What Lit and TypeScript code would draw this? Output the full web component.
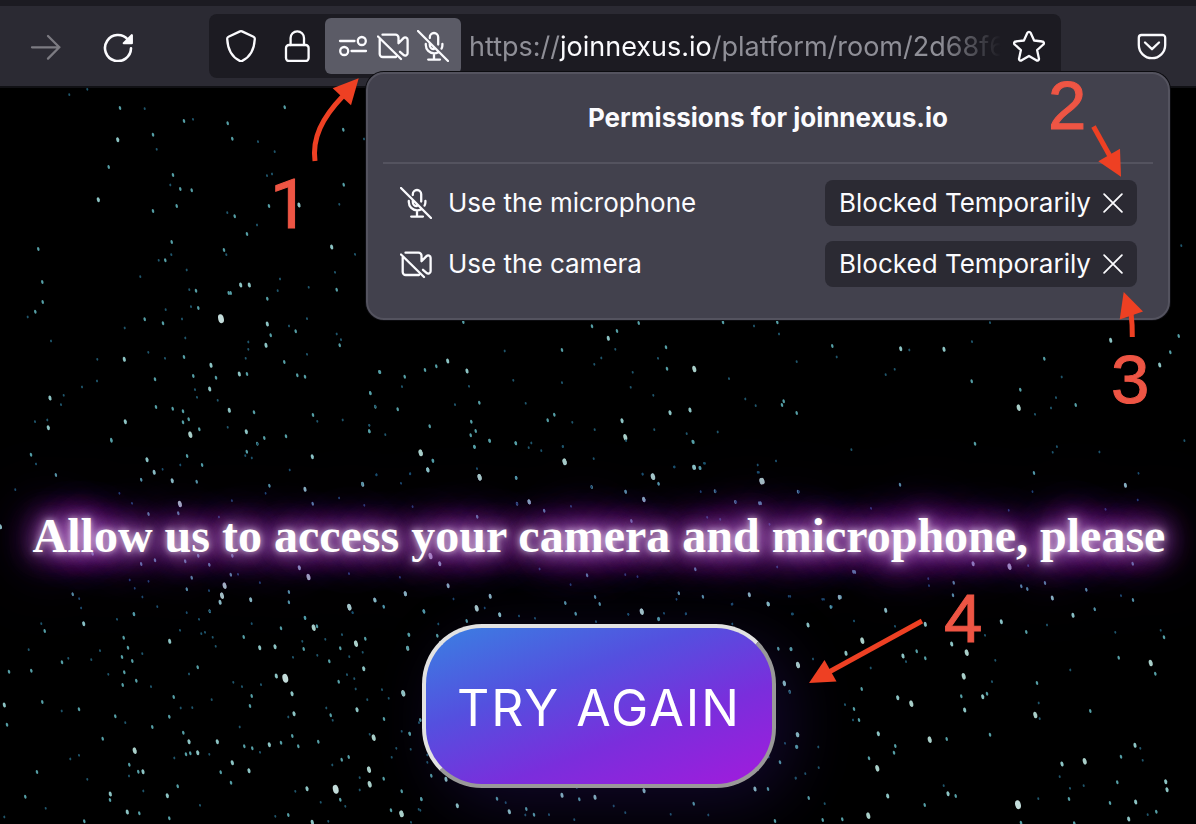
import { LitElement, html, svg, css } from "lit";
import { customElement, state } from "lit/decorators.js";

type Sector = { x: number; y: number; w: number; stars: string };

// Each sector of the sky lists "x,y,magnitude" on a grid of w × 3 units per pixel.
const SKY: Sector[] = [
  {
    x: 0, y: 88, w: 3,
    stars: `262,4,1 208,20,1 360,60,2 434,62,1 552,99,2 579,94,1 683,106,2 854,58,2 353,155,3 459,140,2 470,184,1 697,152,2
    774,161,1 824,191,1 1030,125,2 1092,153,1 326,237,2 519,261,2 511,291,1 541,303,2 575,307,2 530,354,2 295,335,3 459,369,2
    682,374,1 704,385,2 807,354,2 897,351,3 801,263,1 816,258,1 1031,290,2 1018,349,1 741,438,2 771,411,1 115,483,2 515,462,2
    514,500,1 496,517,2 476,517,1 672,486,2 679,500,1 995,477,3 1065,499,1 127,582,2 128,642,2 106,671,2 83,687,1 153,759,1
    421,566,1 560,546,1 568,605,1 588,608,2 573,656,1 595,660,2 546,693,1 497,665,1 434,694,2 489,706,2 663,692,5 686,615,2
    692,615,2 722,591,3 748,591,3 802,632,2 833,608,1 926,598,1 1005,553,1 1010,605,2 840,573,1 802,708,3 812,742,2 798,772,3
    867,714,1 887,730,2 921,692,1 1010,738,1 1019,772,2 1023,755,1 374,720,1 556,750,1 745,762,1 745,784,1 737,811,1 373,814,3
    292,814,1 445,793,1 495,811,1 552,807,2 633,832,3 648,869,2 580,864,2 718,858,3 741,858,2 853,822,2 892,862,2 915,866,2
    921,799,1 465,874,2 246,897,1 291,879,1 150,930,3 191,922,1 183,950,1 629,903,3 585,905,1 591,928,1 468,957,2 518,962,2
    549,970,2 566,994,2 549,1003,2 688,967,3 762,973,2 939,981,2 952,1000,1 1028,996,1 376,1001,3 105,1001,1 145,1019,3
    142,996,1 334,1055,2 598,1024,2 571,1040,4 683,1018,1 739,1031,3 793,1050,2 772,1067,2 858,1045,2 1108,1030,2 1108,1012,1
    1126,956,2 1111,915,2 1138,852,2 653,937,1`,
  },
  {
    x: 360, y: 315, w: 3,
    stars: `310,21,2 696,34,2 836,24,2 771,48,2 745,70,3 766,103,1 606,105,2 434,108,1 263,138,3 229,154,2 195,165,2 321,168,3
    60,171,2 134,185,2 126,215,1 31,235,2 46,274,1 327,214,1 358,263,2 285,269,1 113,283,2 209,334,2 28,349,2 28,331,1 76,359,1
    334,320,2 347,348,2 332,361,2 343,396,2 389,377,2 467,385,2 514,384,1 506,398,1 544,407,1 583,299,2 563,316,2 497,265,1
    460,196,1 606,203,1 703,148,1 724,129,1 818,172,1 812,217,1 918,97,2 894,130,1 921,161,2 1003,162,4 1089,22,2 1182,33,1
    1252,22,2 1257,57,1 1310,140,1 1107,191,1 880,241,1 930,293,3 990,285,3 1156,252,1 1271,259,2 1266,270,2 1310,294,2
    1187,272,1 786,317,3 796,367,4 883,344,1 980,356,1 998,380,2 1073,351,1 704,344,1 637,322,1 608,395,1 614,440,4 701,431,1
    182,413,4 219,437,2 203,464,3 351,461,1 359,487,4 468,489,2 49,480,1 150,477,1 8,508,3 123,505,1 942,456,1 1001,457,3
    1019,459,2 1032,445,1 878,485,4 848,478,1 895,507,1 1193,450,1 1193,472,1 1204,499,4 695,516,2 797,530,2 851,553,3
    1065,529,2 1022,530,1 1314,530,2 1248,438,1 507,560,3 1126,561,2 1198,565,2 471,566,2`,
  },
  {
    x: 800, y: 160, w: 3,
    stars: `570,488,1 516,545,1 97,558,2 110,591,1 302,566,3 432,568,3 328,570,1 284,628,1 257,644,1 515,664,2 733,596,2 932,541,3
    1136,528,2 1111,577,2 1079,615,3 785,651,1 661,689,2 656,743,4 768,713,1 753,744,1 827,735,2 705,763,1 1144,257,1`,
  },
  {
    x: 0, y: 440, w: 2.613,
    stars: `291,2,2 81,44,2 94,72,1 146,105,2 384,59,3 403,97,3 425,88,1 369,119,2 450,122,3 514,125,2 489,48,2 471,75,1 528,75,2
    645,35,2 641,47,1 658,54,1 673,12,1 816,50,3 757,90,1 704,137,2 694,160,1 797,148,3 817,191,2 606,182,1 470,192,4 466,220,2
    345,190,1 312,160,1 388,222,2 40,149,1 1,260,3 572,231,1 886,174,1 947,132,2 984,104,1 1072,101,1 952,196,1 1099,39,4
    1131,62,2 1118,90,3 1240,20,2 1279,2,2 1253,112,4 1349,113,2 1348,10,2 1475,66,4 1471,19,1 1383,186,3 1422,212,2 1351,191,1
    1545,141,1 1247,230,2 1078,200,1 1492,199,1 242,341,2 369,372,2 405,361,2 484,364,2 547,374,2 518,347,2 607,347,2 603,404,2
    622,403,1 501,413,2 587,437,4 580,467,4 575,487,3 546,452,1 488,448,2 388,424,1 352,445,1 372,471,1 339,420,1 190,463,2
    207,476,1 212,504,1 350,523,2 411,500,1 548,514,2 655,479,3 679,428,1 755,456,2 755,487,2 782,383,3 806,411,4 797,533,2
    912,401,1 913,501,4 921,518,1 981,481,2 1003,500,1 1059,461,3 1107,514,2 1125,348,4 1149,371,3 1171,437,3 1185,477,1
    1245,505,3 1281,469,3 1306,524,2 1477,490,1 1491,434,1 1534,406,2 1410,387,1 1504,522,1 1555,471,2 1045,412,1`,
  },
  {
    x: 600, y: 440, w: 2.613,
    stars: `68,2,1 244,6,2 247,82,3 262,84,2 274,70,1 195,81,1 139,110,4 111,102,1 153,131,2 67,155,2 115,179,3 302,154,1
    415,97,1 425,123,4 420,190,2 356,186,1 520,155,1 280,232,1 314,238,1 657,29,1 784,134,2 980,11,2 1194,20,1 1183,37,1
    1305,36,1 1134,99,2 1130,155,1 1068,211,1 1373,136,3 1407,100,1 1405,180,1 1321,208,1 1527,2,1 82,243,2 443,253,1 708,205,1
    249,388,2 463,381,1 666,396,2 98,410,1 66,404,1 206,460,2 200,478,1 269,470,2 390,464,3 441,492,2 110,514,3 74,523,1
    154,536,2 225,521,1 346,492,1 497,469,1 585,478,1 606,500,1 629,471,2 504,522,1 975,371,3 1070,380,4 1119,377,1 1392,371,2`,
  },
  {
    x: 0, y: 590, w: 3,
    stars: `251,101,3 402,72,2 351,88,1 124,101,1 134,123,2 86,179,1 186,217,2 205,205,1 27,245,2 94,242,2 300,182,1 274,209,1
    371,143,2 384,173,2 366,201,2 397,213,2 427,191,1 373,247,2 409,272,2 368,285,2 325,253,1 509,154,3 540,121,1 560,68,1
    597,88,1 630,64,1 604,131,1 615,127,1 638,142,1 593,232,2 567,252,1 647,169,1 755,101,1 731,141,2 779,173,3 825,170,3
    843,115,2 915,84,2 941,113,4 951,109,2 976,148,1 907,154,1 911,177,2 952,196,1 988,214,2 879,202,1 1048,52,4 1058,68,1
    1124,30,3 1151,50,2 1216,11,3 1272,65,2 1226,134,2 1223,175,3 1096,146,2 1068,161,4 1088,187,1 1026,134,1 1021,175,2
    1048,200,1 1091,236,3 1016,275,2 1041,254,1 1063,266,1 1067,297,1 829,258,3 856,265,5 876,311,3 882,371,3 700,277,1
    726,290,1 783,284,1 755,318,2 750,348,2 635,329,1 521,321,2 508,380,2 577,353,1 542,354,1 127,336,2 13,345,3 21,404,2
    185,363,1 237,358,2 346,379,2 376,398,1 308,446,2 453,290,1 457,411,2 404,482,4 550,428,2 567,455,3 652,455,3 719,411,1
    733,469,2 757,475,2 780,487,1 808,464,3 843,458,2 877,438,2 895,469,2 955,455,2 992,376,2 998,391,1 979,354,1 1071,359,3
    1102,329,1 1166,325,1 1146,299,1 1210,310,4 1152,387,2 1121,443,4 1109,433,1 1229,431,2 1205,424,1 1257,398,1 1189,475,1
    1175,502,1 1046,501,2 1025,509,2 997,525,1 1107,539,4 1109,583,4 1079,563,1 1079,600,1 1151,566,2 1007,598,5 1021,629,2
    1036,649,1 921,596,3 886,604,1 962,637,1 865,675,2 826,679,1 937,697,3 985,694,1 1173,661,2 1205,671,4 1264,628,2
    1256,658,1 697,518,3 662,547,2 693,578,2 747,542,3 558,493,2 571,490,2 593,488,3 628,493,1 523,504,1 111,546,2 211,507,1
    237,496,1 388,524,2 415,545,2 429,545,3 387,558,1 262,568,1 76,620,2 137,655,1 331,612,3 330,630,2 430,603,1 533,589,2
    502,617,3 600,646,1 382,666,3 418,670,2 508,685,2 253,694,2 13,681,1 865,381,1 1282,517,1 1233,697,1`,
  },
  {
    x: 400, y: 600, w: 3,
    stars: `72,34,2 200,63,2 115,72,1 27,104,2 23,144,2 9,280,3 112,107,2 230,25,4 254,24,1 299,44,3 357,48,1 405,55,1 496,9,2
    527,41,2 599,12,2 588,65,1 725,35,4 685,43,1 792,40,1 775,58,2 857,42,1 995,13,1 1104,12,3 1176,42,1 997,72,1 1135,146,2
    1174,147,2 1193,195,3 1153,249,3 1169,275,2 1193,404,3 1191,440,2 1187,534,1 1140,487,2 1106,471,1 1155,430,1 1065,567,3
    1104,567,2 1125,663,2 925,645,1 881,611,2 812,643,1 732,572,3 676,638,1 641,618,1 585,592,3 538,598,2 486,586,3 530,563,1
    523,659,1 447,644,1 402,644,2 379,627,2 376,645,1 328,635,3 291,596,2 317,608,1 172,617,3 138,538,3 94,527,2 5,574,2
    64,597,2 61,631,1 4,642,4 29,401,2 61,360,2 32,448,1 82,465,1`,
  },
  {
    x: 780, y: 570, w: 3,
    stars: `220,5,2 445,26,1 447,47,1 521,38,2 519,76,2 795,39,2 724,49,2 742,57,2 817,84,3 919,59,2 1023,77,1 1059,90,2
    178,82,3 127,88,1 152,111,2 26,79,1 36,132,1 84,165,3 317,121,3 222,153,1 345,169,1 436,163,3 247,212,4 198,250,3 369,258,3
    378,275,1 410,244,2 436,265,2 272,294,1 245,357,2 99,267,1 54,285,4 13,341,3 32,238,2 29,366,1 515,222,3 560,248,4
    615,196,1 664,155,3 739,186,2 879,136,3 944,118,2 801,165,1 1006,187,1 1152,202,2 1142,181,1 1016,263,2 1112,279,4
    1126,311,2 871,300,1 771,339,2 551,319,4 636,335,1 646,271,1 608,380,3 621,371,2 544,379,2 554,420,3 766,435,4 779,446,1
    776,399,1 931,423,2 353,383,3 394,401,4 222,417,2 237,450,2 219,450,1 195,404,1 295,491,3 346,528,2 342,548,2 449,509,4
    500,507,2 630,494,2 52,494,3 49,531,2 115,531,1 116,593,1 76,611,1 47,625,1 86,684,2 134,701,1 267,565,2 292,595,4
    323,678,3 265,737,4 187,748,2 128,750,2 434,705,2 504,671,3 527,678,2 491,647,1 846,582,3 914,574,4 839,620,1 867,687,2
    775,686,1 714,704,5 911,647,1 990,699,2 1012,637,2 1067,696,3 1046,747,3 1129,725,2 1157,635,3 1161,659,3 1103,734,1
    1065,526,3 1023,560,2 1088,571,1 1081,535,1 723,758,2 883,760,2 870,655,1`,
  },
];

const TINTS = ["#1f566c", "#559fa6", "#8cc4c4", "#a9cfc9", "#c3dcda"];
const RADII = [
  [1, 1.4],
  [1.2, 2],
  [1.5, 2.6],
  [1.9, 3.4],
  [2.8, 4.5],
];

const parseSky = () =>
  SKY.flatMap(({ x, y, w, stars }) =>
    stars.trim().split(/\s+/).map((entry) => {
      const [sx, sy, magnitude] = entry.split(",").map(Number);
      return { x: x + sx / w, y: y + sy / 3, level: magnitude - 1 };
    })
  );

const icon = (body: unknown) =>
  html`<svg class="icon" viewBox="0 0 32 32" aria-hidden="true">${body}</svg>`;

const forwardIcon = icon(svg`<path d="M2 17.300H29.500M18 6l11.300 11.300L18 28.600" />`);
const reloadIcon = icon(svg`
  <path stroke-width="2.600" d="M29 18.300A13 13 0 1 1 25.800 9.500" />
  <path d="M29.800 5.200V13.200H21.800Z" fill="currentColor" />`);
const shieldIcon = icon(svg`<path d="M15 1.400a2.500 2.500 0 0 1 2 0l11.500 5.400a2.200 2.200 0 0 1 1.300 2.200C29.400 17.500 26 26.500 17.200 30.900a2.500 2.500 0 0 1-2.400 0C6 26.500 2.600 17.500 2.200 9a2.200 2.200 0 0 1 1.300-2.200z" />`);
const lockIcon = icon(svg`
  <rect x="5" y="15" width="22.600" height="16" rx="3" />
  <path d="M9.600 15V8a6.700 6.700 0 0 1 13.400 0V15" />`);
const tuneIcon = icon(svg`
  <path d="M3 11H17.500M14.500 21H29" />
  <circle cx="24.800" cy="11" r="4" /><circle cx="7.200" cy="21" r="4" />`);
const cameraOffIcon = icon(svg`
  <path d="M1 6.500L24 29M5.500 4.700H18.500a3 3 0 0 1 3 3v5.600l5-5.200a2.400 2.400 0 0 1 4.100 1.700v13.400a2.400 2.400 0 0 1-4.100 1.700L23 21.800M2.700 9.500V24a3 3 0 0 0 3 3H19" />`);
const micOffIcon = icon(svg`
  <path d="M1 1L31 31M12.800 8V7.200a4.200 4.200 0 0 1 8.400 0V14.500M12.800 13v2a4.200 4.200 0 0 0 4 4.200M8.800 14v1a8.300 8.300 0 0 0 8.300 8.300c1.500 0 2.700-.3 3.800-.9M25.400 14v1c0 1.400-.3 2.600-.8 3.600M17 23.500V29.600M11.200 29.600H23" />`);
const starIcon = icon(svg`<path d="M14.400 2.800a1.800 1.800 0 0 1 3.200 0l3.500 7.700 8.200 1a1.700 1.700 0 0 1 1 3l-6.200 5.600 1.800 8.300a1.700 1.700 0 0 1-2.600 1.900L16 26l-7.300 4.300a1.700 1.700 0 0 1-2.600-1.900l1.800-8.300-6.200-5.600a1.700 1.700 0 0 1 1-3l8.200-1z" />`);
const pocketIcon = icon(svg`
  <path d="M5.500 5H26.500a2.700 2.700 0 0 1 2.700 2.700V15a13.200 13.200 0 0 1-26.400 0V7.700A2.700 2.700 0 0 1 5.500 5z" />
  <path d="M9 12.500l7 6.700 7-6.700" />`);
const closeIcon = html`<svg class="close" viewBox="0 0 18 18" aria-hidden="true"><path d="M1 1L17 17M17 1L1 17" /></svg>`;

@customElement("star-field")
class StarField extends LitElement {
  static styles = css`
    :host {
      position: absolute;
      inset: 0;
      overflow: hidden;
    }
    .sky {
      display: block;
      width: 100%;
      height: 100%;
    }
  `;

  private stars = parseSky();

  render() {
    return html`<svg class="sky" viewBox="0 0 1196 824" preserveAspectRatio="xMidYMid slice" aria-hidden="true">
      ${this.stars.map(({ x, y, level }) => svg`
        <ellipse cx="0" cy="0" rx=${RADII[level][0]} ry=${RADII[level][1]} fill=${TINTS[level]}
          transform="translate(${x.toFixed(1)} ${y.toFixed(1)}) rotate(-14)" />`)}
    </svg>`;
  }
}

@customElement("guide-marks")
class GuideMarks extends LitElement {
  static styles = css`
    :host {
      position: absolute;
      top: 0;
      left: 0;
      z-index: 3;
      pointer-events: none;
    }
    .marks {
      display: block;
    }
    .shaft {
      fill: none;
      stroke: #ee4023;
      stroke-width: 5;
    }
    .head {
      fill: #ee4023;
    }
    .step {
      fill: #ee5544;
      stroke: #ee5544;
      stroke-width: 1;
      font-family: "Liberation Sans", Arial, sans-serif;
      font-size: 69px;
    }
    .plain {
      font-family: Roboto, sans-serif;
    }
  `;

  render() {
    return html`<svg class="marks" width="1196" height="824" viewBox="0 0 1196 824">
      <path class="shaft" d="M315 161C312 138 322 118 343 96" />
      <path class="head" d="M358.700 78.300L332.700 88.300L351 105.300Z" />
      <text class="step plain" x="270" y="228">1</text>
      <path class="shaft" d="M1093.500 126.500L1111 158" />
      <path class="head" d="M1121 176.700L1098.300 161.300L1120 148.800Z" />
      <text class="step" x="1048" y="129">2</text>
      <path class="shaft" d="M1132.300 337Q1132.500 325 1131 313" />
      <path class="head" d="M1123.700 292L1119.700 319.500L1143 311.500Z" />
      <text class="step" x="1111" y="403">3</text>
      <path class="shaft" d="M922 621L829 672" />
      <path class="head" d="M809 683L824.500 660L836.500 681.500Z" />
      <text class="step" x="944" y="642">4</text>
    </svg>`;
  }
}

@customElement("app-root")
class AppRoot extends LitElement {
  @state() private permissions = [
    { id: "microphone", label: "Use the microphone", glyph: micOffIcon },
    { id: "camera", label: "Use the camera", glyph: cameraOffIcon },
  ];

  static styles = css`
    :host {
      position: relative;
      display: flex;
      flex-direction: column;
      min-height: 100vh;
      overflow: hidden;
      background: #000;
      color: #fbfbfe;
      font-family: Inter, "Open Sans", sans-serif;
      font-size: 26px;
      line-height: 32px;
    }
    * {
      box-sizing: border-box;
    }
    button {
      margin: 0;
      padding: 0;
      border: 0;
      background: none;
      color: inherit;
      font: inherit;
      cursor: pointer;
    }
    .icon {
      display: block;
      flex: none;
      width: 32px;
      height: 32px;
    }
    .icon,
    .close {
      fill: none;
      stroke: currentColor;
      stroke-width: 2.3;
      stroke-linecap: round;
      stroke-linejoin: round;
    }
    .close {
      display: block;
      width: 20px;
      height: 20px;
      stroke-width: 1.6;
    }
    .toolbar {
      position: relative;
      z-index: 2;
      display: flex;
      align-items: center;
      gap: 75px;
      padding: 8px 28px 8px 30px;
      border-top: 6px solid #1c1b22;
      border-bottom: 2px solid #101014;
      background: #2b2a33;
    }
    .nav {
      display: flex;
      gap: 40px;
    }
    .forward {
      color: #7c7b82;
    }
    .urlbar {
      position: relative;
      display: flex;
      flex: 1;
      align-items: center;
      min-width: 0;
      height: 64px;
      padding: 4px 16px;
      border-radius: 8px;
      background: #1c1b22;
    }
    .identity {
      display: flex;
      gap: 24px;
      margin-right: 12px;
    }
    .chip {
      display: flex;
      align-items: center;
      gap: 8px;
      height: 56px;
      padding: 0 12px;
      border-radius: 6px;
      background: #5b5b66;
    }
    .address {
      flex: 1;
      min-width: 0;
      margin: 0 12px 0 8px;
      padding-top: 2px;
      overflow: hidden;
      color: #8f8f97;
      font-size: 27px;
      line-height: 34px;
      white-space: nowrap;
      mask-image: linear-gradient(to left, transparent, #000 60px);
    }
    .host {
      color: #fbfbfe;
    }
    .panel {
      position: absolute;
      top: 58px;
      right: -109px;
      left: 157px;
      padding: 0 15px 31px;
      border: 2px solid #54535f;
      border-radius: 18px;
      background: #42414d;
      box-shadow: 0 0 0 1px #0c0c10;
    }
    .panel-title {
      margin: 0;
      padding: 28px 0;
      border-bottom: 2px solid #54535f;
      font-size: 26px;
      font-weight: 700;
      line-height: 32px;
      text-align: center;
    }
    .list {
      display: grid;
      gap: 15px;
      margin: 0;
      padding: 16px 16px 0 17px;
      list-style: none;
    }
    .row {
      display: flex;
      align-items: center;
      gap: 16px;
    }
    .label {
      flex: 1;
    }
    .blocked {
      display: flex;
      align-items: center;
      gap: 12px;
      height: 46px;
      padding: 0 14px;
      border-radius: 8px;
      background: #2b2a33;
    }
    .stage {
      position: relative;
      z-index: 1;
      display: flex;
      flex: 1;
      flex-direction: column;
      align-items: center;
      justify-content: flex-end;
      gap: 60px;
      padding: 0 22px 36px 24px;
    }
    .headline {
      margin: 0;
      color: #fff;
      font-family: "Liberation Serif", "Times New Roman", serif;
      font-size: 48px;
      font-weight: 700;
      line-height: 56px;
      text-align: center;
      text-shadow:
        0 0 6px rgba(255, 255, 255, 0.6),
        0 0 16px rgba(250, 220, 255, 0.6),
        0 0 28px #c060dc,
        0 0 36px #a83cc8,
        0 0 48px #9628b8,
        0 0 64px #8418a8,
        0 0 84px #700c98;
    }
    .retry {
      padding: 48px 31px 44px;
      border: 4px solid;
      border-color: #e2e2e2 #999 #999 #e2e2e2;
      border-radius: 60px;
      background: linear-gradient(160deg, #3a80e2, #5450df 35%, #7a2edc 65%, #a21bdc);
      box-shadow: 16px 16px 64px rgba(60, 30, 150, 0.28);
      color: #fff;
      font-size: 50px;
      font-weight: 400;
      line-height: 64px;
      letter-spacing: 2px;
    }
  `;

  render() {
    return html`
      <star-field></star-field>
      <header class="toolbar">
        <nav class="nav">
          <button class="forward" aria-label="Forward">${forwardIcon}</button>
          <button aria-label="Reload">${reloadIcon}</button>
        </nav>
        <div class="urlbar">
          <div class="identity">
            <button aria-label="Tracking protection">${shieldIcon}</button>
            <button aria-label="Connection security">${lockIcon}</button>
          </div>
          <button class="chip" aria-label="Site permissions">${tuneIcon}${cameraOffIcon}${micOffIcon}</button>
          <div class="address" role="textbox" aria-label="Address">https://<span class="host">joinnexus.io</span>/platform/room/2d68f6</div>
          <button aria-label="Bookmark">${starIcon}</button>
          <section class="panel">
            <h2 class="panel-title">Permissions for joinnexus.io</h2>
            <ul class="list">
              ${this.permissions.map((p) => html`
                <li class="row">
                  ${p.glyph}
                  <span class="label" id=${p.id}>${p.label}</span>
                  <button class="blocked" aria-describedby=${p.id}>Blocked Temporarily ${closeIcon}</button>
                </li>`)}
            </ul>
          </section>
        </div>
        <button aria-label="Save to Pocket">${pocketIcon}</button>
      </header>
      <main class="stage">
        <h1 class="headline">Allow us to access your camera and microphone, please</h1>
        <button class="retry">TRY AGAIN</button>
      </main>
      <guide-marks></guide-marks>
    `;
  }
}
